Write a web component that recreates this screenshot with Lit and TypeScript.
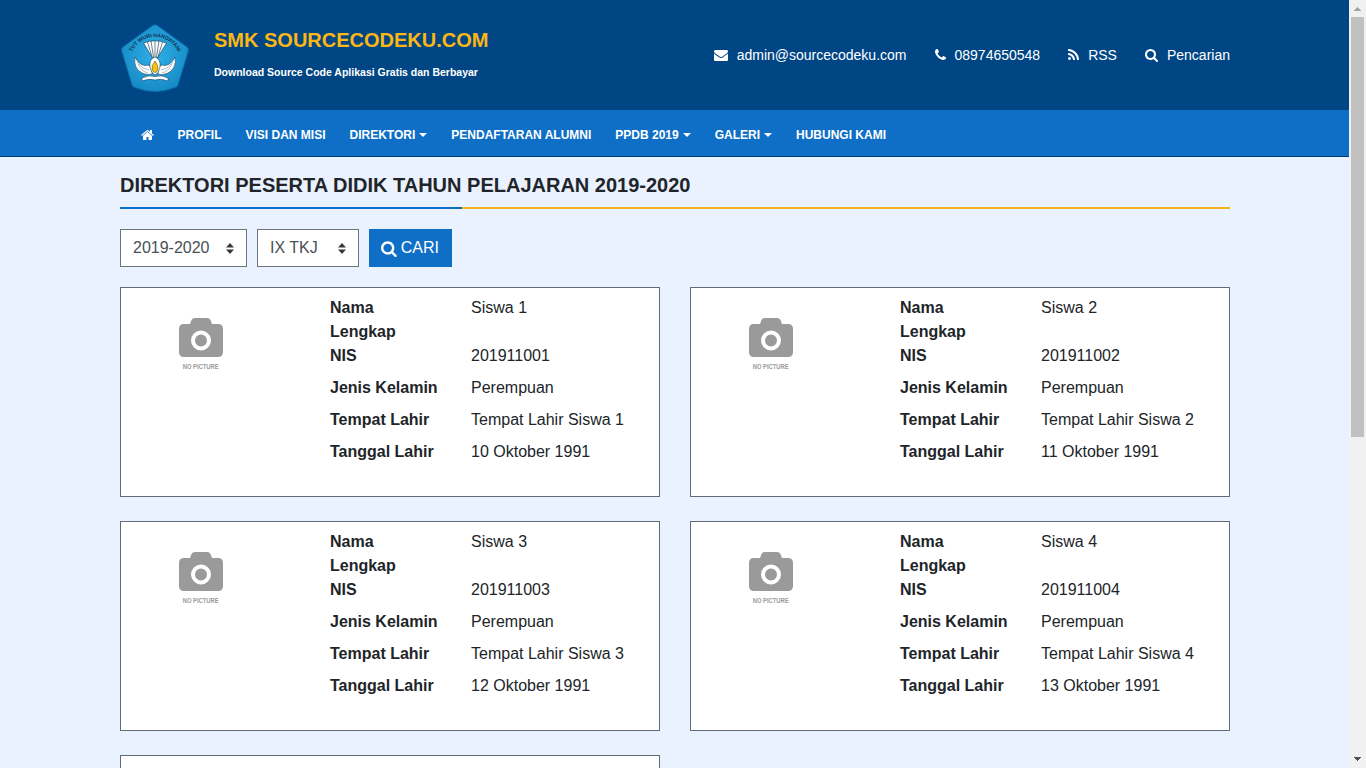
import { LitElement, html, css, svg } from 'lit';
import { customElement } from 'lit/decorators.js';

// font awesome 4 glyph shapes on a 1792 box, x and adv crop each one to its own width
const icons: Record<string, { x: number; adv: number; d: string }> = {
  search: { x: 64, adv: 1664, d: 'M1216 832q0-185-131.5-316.5t-316.5-131.5-316.5 131.5-131.5 316.5 131.5 316.5 316.5 131.5 316.5-131.5 131.5-316.5zm512 832q0 52-38 90t-90 38q-54 0-90-38l-343-342q-179 124-399 124-143 0-273.5-55.5t-225-150-150-225-55.5-273.5 55.5-273.5 150-225 225-150 273.5-55.5 273.5 55.5 225 150 150 225 55.5 273.5q0 220-124 399l343 343q37 37 37 90z' },
  envelope: { x: 0, adv: 1792, d: 'M1792 710v794q0 66-47 113t-113 47h-1472q-66 0-113-47t-47-113v-794q44 49 101 87 362 246 497 345 57 42 92.5 65.5t94.5 48 110 24.5h2q51 0 110-24.5t94.5-48 92.5-65.5q170-123 498-345 57-39 100-87zm0-294q0 79-49 151t-122 123q-376 261-468 325-10 7-42.5 30.5t-54 38-52 32.5-57.5 27-50 9h-2q-23 0-50-9t-57.5-27-52-32.5-54-38-42.5-30.5q-91-64-262-182.5t-205-142.5q-62-42-117-115.5t-55-136.5q0-78 41.5-130t118.5-52h1472q65 0 112.5 47t47.5 113z' },
  phone: { x: 192, adv: 1408, d: 'M1600 1240q0 27-10 70.5t-21 68.5q-21 50-122 106-94 51-186 51-27 0-53-3.5t-57.5-12.5-47-14.5-55.5-20.5-49-18q-98-35-175-83-127-79-264-216t-216-264q-48-77-83-175-3-9-18-49t-20.5-55.5-14.5-47-12.5-57.5-3.5-53q0-92 51-186 56-101 106-122 25-11 68.5-21t70.5-10q14 0 21 3 18 6 53 76 11 19 30 54t35 63.5 31 53.5q3 4 17.5 25t21.5 35.5 7 28.5q0 20-28.5 50t-62 55-62 53-28.5 46q0 9 5 22.5t8.5 20.5 14 24 11.5 19q76 137 174 235t235 174q2 1 19 11.5t24 14 20.5 8.5 22.5 5q18 0 46-28.5t53-62 55-62 50-28.5q14 0 28.5 7t35.5 21.5 25 17.5q25 15 53.5 31t63.5 35 54 30q70 35 76 53 3 7 3 21z' },
  rss: { x: 192, adv: 1408, d: 'M576 1344q0 80-56 136t-136 56-136-56-56-136 56-136 136-56 136 56 56 136zm512 123q2 28-17 48-18 21-47 21h-135q-25 0-43-16.5t-20-41.5q-22-229-184.5-391.5t-391.5-184.5q-25-2-41.5-20t-16.5-43v-135q0-29 21-47 17-17 43-17h5q160 13 306 80.5t259 181.5q114 113 181.5 259t80.5 306zm512 2q2 27-18 47-18 20-46 20h-143q-26 0-44.5-17.5t-19.5-42.5q-12-215-101-408.5t-231.5-336-336-231.5-408.5-102q-25-1-42.5-19.5t-17.5-43.5v-143q0-28 20-46 18-18 44-18h3q262 13 501.5 120t425.5 294q187 186 294 425.5t120 501.5z' },
  home: { x: 64, adv: 1664, d: 'M1472 992v480q0 26-19 45t-45 19h-384v-384h-256v384h-384q-26 0-45-19t-19-45v-480q0-1 .5-3t.5-3l575-474 575 474q1 2 1 6zm223-69l-62 74q-8 9-21 11h-3q-13 0-21-7l-692-577-692 577q-12 8-24 7-13-2-21-11l-62-74q-8-10-7-23.5t11-21.5l719-599q32-26 76-26t76 26l244 204v-195q0-14 9-23t23-9h192q14 0 23 9t9 23v408l219 182q10 8 11 21.5t-7 23.5z' },
};

const icon = (name: string, size: number) => {
  const g = icons[name];
  return html`
    <svg class="fa" width=${(g.adv / 1792) * size} height=${size} viewBox="${g.x} 0 ${g.adv} 1792" fill="currentColor">
      ${svg`<path d=${g.d}></path>`}
    </svg>`;
};

// menu entries, caret marks the ones with a dropdown
const menu = [
  { label: 'PROFIL' },
  { label: 'VISI DAN MISI' },
  { label: 'DIREKTORI', caret: true },
  { label: 'PENDAFTARAN ALUMNI' },
  { label: 'PPDB 2019', caret: true },
  { label: 'GALERI', caret: true },
  { label: 'HUBUNGI KAMI' },
];

const students = [
  { name: 'Siswa 1', nis: '201911001', born: 'Tempat Lahir Siswa 1', date: '10 Oktober 1991' },
  { name: 'Siswa 2', nis: '201911002', born: 'Tempat Lahir Siswa 2', date: '11 Oktober 1991' },
  { name: 'Siswa 3', nis: '201911003', born: 'Tempat Lahir Siswa 3', date: '12 Oktober 1991' },
  { name: 'Siswa 4', nis: '201911004', born: 'Tempat Lahir Siswa 4', date: '13 Oktober 1991' },
  { name: 'Siswa 5', nis: '201911005', born: 'Tempat Lahir Siswa 5', date: '14 Oktober 1991' },
];

@customElement('app-root')
export class AppRoot extends LitElement {
  static styles = css`
    :host { display: block; }
    * { box-sizing: border-box; }

    .page {
      display: flex;
      height: 100vh;
      overflow: hidden;
      color: #212529;
      font: 16px/24px "Liberation Sans", Arial, sans-serif;
    }
    .content { flex: 1; min-width: 0; background: #eaf1ff; }

    /* the browser photographs without scrollbars, so this one is drawn */
    .bar {
      display: flex;
      flex-direction: column;
      width: 17px;
      flex: none;
      background: #f1f1f1;
    }
    .bar svg { display: block; flex: none; }
    .thumb { width: 13px; height: 420px; margin-left: 2px; background: #c1c1c1; }
    .bar .down { margin-top: auto; }

    /* the half pixel keeps text on whole pixels in the 1349 wide column */
    .container { width: 1140px; margin: 0 auto; padding: 0 14.5px 0 15.5px; }
    .fa { display: block; flex: none; }

    /* top band */
    .top { background: #004685; height: 110px; }
    .top .container { display: flex; align-items: center; height: 100%; }
    .logo { display: block; width: 68px; height: 70px; margin: 8px 0 0 1px; flex: none; }
    .brand { margin-left: 25px; padding-bottom: 2px; flex: 1; }
    .brand h1 {
      margin: 0;
      font-size: 20px;
      line-height: 24px;
      font-weight: 700;
      color: #fbb713;
    }
    .brand p {
      margin: 12px 0 0;
      font-size: 10.5px;
      line-height: 16px;
      font-weight: 700;
      color: #fff;
    }
    .contact { display: flex; gap: 28px; color: #fff; font-size: 14px; }
    .contact span { display: flex; align-items: center; gap: 9px; }

    /* menu */
    nav { background: #0f6fc6; height: 47px; border-bottom: 1px solid #003a70; }
    nav .container { display: flex; align-items: center; height: 46px; padding-top: 4px; padding-left: 24px; }
    nav a {
      display: flex;
      align-items: center;
      padding: 0 12px;
      color: #fff;
      font-size: 12px;
      font-weight: 700;
    }
    .caret {
      margin-left: 4px;
      border-top: 4px solid #fff;
      border-left: 4px solid transparent;
      border-right: 4px solid transparent;
    }

    /* heading with two coloured underline parts */
    h2 {
      margin: 0;
      padding-top: 16px;
      font-size: 20px;
      line-height: 24px;
      font-weight: 700;
      color: #212529;
    }
    .rule { display: flex; height: 2px; margin-top: 10px; }
    .rule i { background: #0f6fc6; width: 342px; }
    .rule b { background: #f4b417; flex: 1; }

    /* filter */
    .filter { display: flex; gap: 10px; margin-top: 20px; }
    .pick { position: relative; }
    .pick select {
      display: block;
      appearance: none;
      height: 38px;
      padding: 0 12px 2px;
      border: 1px solid #6c757d;
      border-radius: 0;
      background: #fff;
      color: #495057;
      font: 16px "Liberation Sans", Arial, sans-serif;
    }
    .y select { width: 127px; }
    .k select { width: 102px; }
    .pick svg { position: absolute; right: 13px; top: 14px; pointer-events: none; }
    button {
      display: flex;
      align-items: center;
      gap: 4px;
      height: 38px;
      width: 83px;
      padding: 0 12px;
      border: 0;
      background: #0f6fc6;
      color: #fff;
      font: 16px "Liberation Sans", Arial, sans-serif;
    }

    /* student cards */
    .cards {
      display: grid;
      grid-template-columns: 540px 540px;
      gap: 24px 30px;
      margin-top: 20px;
      padding-bottom: 25px;
    }
    .card {
      display: flex;
      height: 210px;
      background: #fff;
      border: 1px solid #5f6b77;
    }
    .photo {
      display: flex;
      flex-direction: column;
      align-items: center;
      width: 160px;
      padding-top: 30px;
      flex: none;
    }
    .photo span {
      margin-top: 5px;
      font-size: 8px;
      line-height: 10px;
      font-weight: 700;
      color: #9a9a9a;
      white-space: nowrap;
      transform: scaleX(.73);
    }
    .info {
      display: grid;
      grid-template-columns: 141px 1fr;
      align-content: start;
      margin-left: 49px;
      padding-top: 8px;
      flex: 1;
    }
    .info b { width: 80px; font-weight: 700; }
    .info b.wide { width: auto; white-space: nowrap; }
    .pad { padding-bottom: 8px; }

    footer { background: #004685; color: #fff; padding: 32px 0; font-size: 14px; }
    footer h3 { margin: 0 0 12px; font-size: 16px; color: #fbb713; }
    footer p { margin: 0 0 6px; }
  `;

  // tut wuri handayani emblem, simplified
  renderLogo() {
    return html`
      <svg class="logo" viewBox="0 0 68 70">
        <defs>
          <path id="arc" d="M9 38 A25 25 0 0 1 59 38"></path>
          <radialGradient id="shield" cx="50%" cy="45%" r="60%">
            <stop offset="0" stop-color="#2fb0e6"></stop>
            <stop offset="1" stop-color="#1488c4"></stop>
          </radialGradient>
        </defs>
        <path d="M34 .8 Q35.500 .8 37 2 L66 23 Q68 25 67.300 27 L57 61 Q56.200 63 54 63.600 Q34 71.500 14 63.600 Q11.800 63 11 61 L.7 27 Q0 25 2 23 L31 2 Q32.500 .8 34 .8z" fill="url(#shield)" stroke="#0b6ba6" stroke-width="1"></path>
        <text font-family="Liberation Sans" font-size="5.200" font-weight="700" fill="#0c2f4f">
          <textPath href="#arc" startOffset="50%" text-anchor="middle">TUT WURI HANDAYANI</textPath>
        </text>
        <path d="M34 38 L22.500 19 Q34 14.500 45.500 19z" fill="#fff" stroke="#17405f" stroke-width=".7"></path>
        <path d="M26.500 18 L32 36 M30 17 L33 36 M34 16.800 V36 M38 17 L35 36 M41.500 18 L36 36" stroke="#3f5f77" stroke-width=".8"></path>
        <path d="M14 33 Q12 45 22 49.500 Q27 51.500 31 50 L31 43 Q27 40 24 41.500 Q18 41 14 33z" fill="#fff" stroke="#17405f" stroke-width=".6"></path>
        <path d="M54 33 Q56 45 46 49.500 Q41 51.500 37 50 L37 43 Q41 40 44 41.500 Q50 41 54 33z" fill="#fff" stroke="#17405f" stroke-width=".6"></path>
        <path d="M18 40 Q21 45 28 46 M16.500 38 Q19 47 27 49" fill="none" stroke="#5c7f97" stroke-width=".5"></path>
        <path d="M50 40 Q47 45 40 46 M51.500 38 Q49 47 41 49" fill="none" stroke="#5c7f97" stroke-width=".5"></path>
        <path d="M34 33 Q40 35 39 43 Q38 49 34 51 Q30 49 29 43 Q28 35 34 33z" fill="#fff" stroke="#17405f" stroke-width=".6"></path>
        <path d="M34 37 Q38 42 36.800 46 Q35.500 48.500 34 48.500 Q32.500 48.500 31.200 46 Q30 42 34 37z" fill="#f6c70f" stroke="#3d3d16" stroke-width=".5"></path>
        <path d="M21 54 Q28 50.500 34 52.500 Q40 50.500 47 54 L47 57 Q40 54 34 56 Q28 54 21 57z" fill="#fff" stroke="#17405f" stroke-width=".6"></path>
      </svg>`;
  }

  renderCard(s: typeof students[number]) {
    return html`
      <div class="card">
        <div class="photo">
          <svg width="44" height="39" viewBox="0 0 44 39">
            <path d="M5 6 H11 L12.500 2 Q13.500 0 16 0 H28 Q30.500 0 31.500 2 L33 6 H39 Q44 6 44 11 V34 Q44 39 39 39 H5 Q0 39 0 34 V11 Q0 6 5 6z M22 12.500 A10 10 0 1 0 22 32.500 A10 10 0 1 0 22 12.500z M22 16.500 A6 6 0 1 1 22 28.500 A6 6 0 1 1 22 16.500z" fill="#9a9a9a" fill-rule="evenodd"></path>
          </svg>
          <span>NO PICTURE</span>
        </div>
        <div class="info">
          <b>Nama Lengkap</b><span>${s.name}</span>
          <b class="wide pad">NIS</b><span class="pad">${s.nis}</span>
          <b class="wide pad">Jenis Kelamin</b><span class="pad">Perempuan</span>
          <b class="wide pad">Tempat Lahir</b><span class="pad">${s.born}</span>
          <b class="wide pad">Tanggal Lahir</b><span class="pad">${s.date}</span>
        </div>
      </div>`;
  }

  renderArrows() {
    return html`
      <svg width="8" height="11" viewBox="0 0 8 11" fill="#343a40">
        <path d="M4 0 L8 4.500 H0z M0 6.500 H8 L4 11z"></path>
      </svg>`;
  }

  render() {
    return html`
      <div class="page">
        <div class="content">
          <div class="top">
            <div class="container">
              ${this.renderLogo()}
              <div class="brand">
                <h1>SMK SOURCECODEKU.COM</h1>
                <p>Download Source Code Aplikasi Gratis dan Berbayar</p>
              </div>
              <div class="contact">
                <span>${icon('envelope', 14)}admin@sourcecodeku.com</span>
                <span>${icon('phone', 14)}08974650548</span>
                <span>${icon('rss', 14)}RSS</span>
                <span>${icon('search', 14)}Pencarian</span>
              </div>
            </div>
          </div>

          <nav>
            <div class="container">
              <a>${icon('home', 14)}</a>
              ${menu.map(m => html`<a>${m.label}${m.caret ? html`<span class="caret"></span>` : ''}</a>`)}
            </div>
          </nav>

          <main class="container">
            <h2>DIREKTORI PESERTA DIDIK TAHUN PELAJARAN 2019-2020</h2>
            <div class="rule"><i></i><b></b></div>

            <div class="filter">
              <div class="pick y">
                <select><option>2019-2020</option></select>
                ${this.renderArrows()}
              </div>
              <div class="pick k">
                <select><option>IX TKJ</option></select>
                ${this.renderArrows()}
              </div>
              <button>${icon('search', 17)}CARI</button>
            </div>

            <div class="cards">
              ${students.map(s => this.renderCard(s))}
            </div>
          </main>

          <footer>
            <div class="container">
              <h3>SMK SOURCECODEKU.COM</h3>
              <p>admin@sourcecodeku.com</p>
              <p>08974650548</p>
            </div>
          </footer>
        </div>

        <div class="bar">
          <svg width="17" height="17" viewBox="0 0 17 17" fill="#a3a3a3" shape-rendering="crispEdges">
            <path d="M8 7h1v1h1v1h1v1h1v1H5v-1h1V9h1V8h1z"></path>
          </svg>
          <div class="thumb"></div>
          <svg class="down" width="17" height="17" viewBox="0 0 17 17" fill="#505050" shape-rendering="crispEdges">
            <path d="M5 6h7v1h-1v1h-1v1H9v1H8V9H7V8H6V7H5z"></path>
          </svg>
        </div>
      </div>
    `;
  }
}
